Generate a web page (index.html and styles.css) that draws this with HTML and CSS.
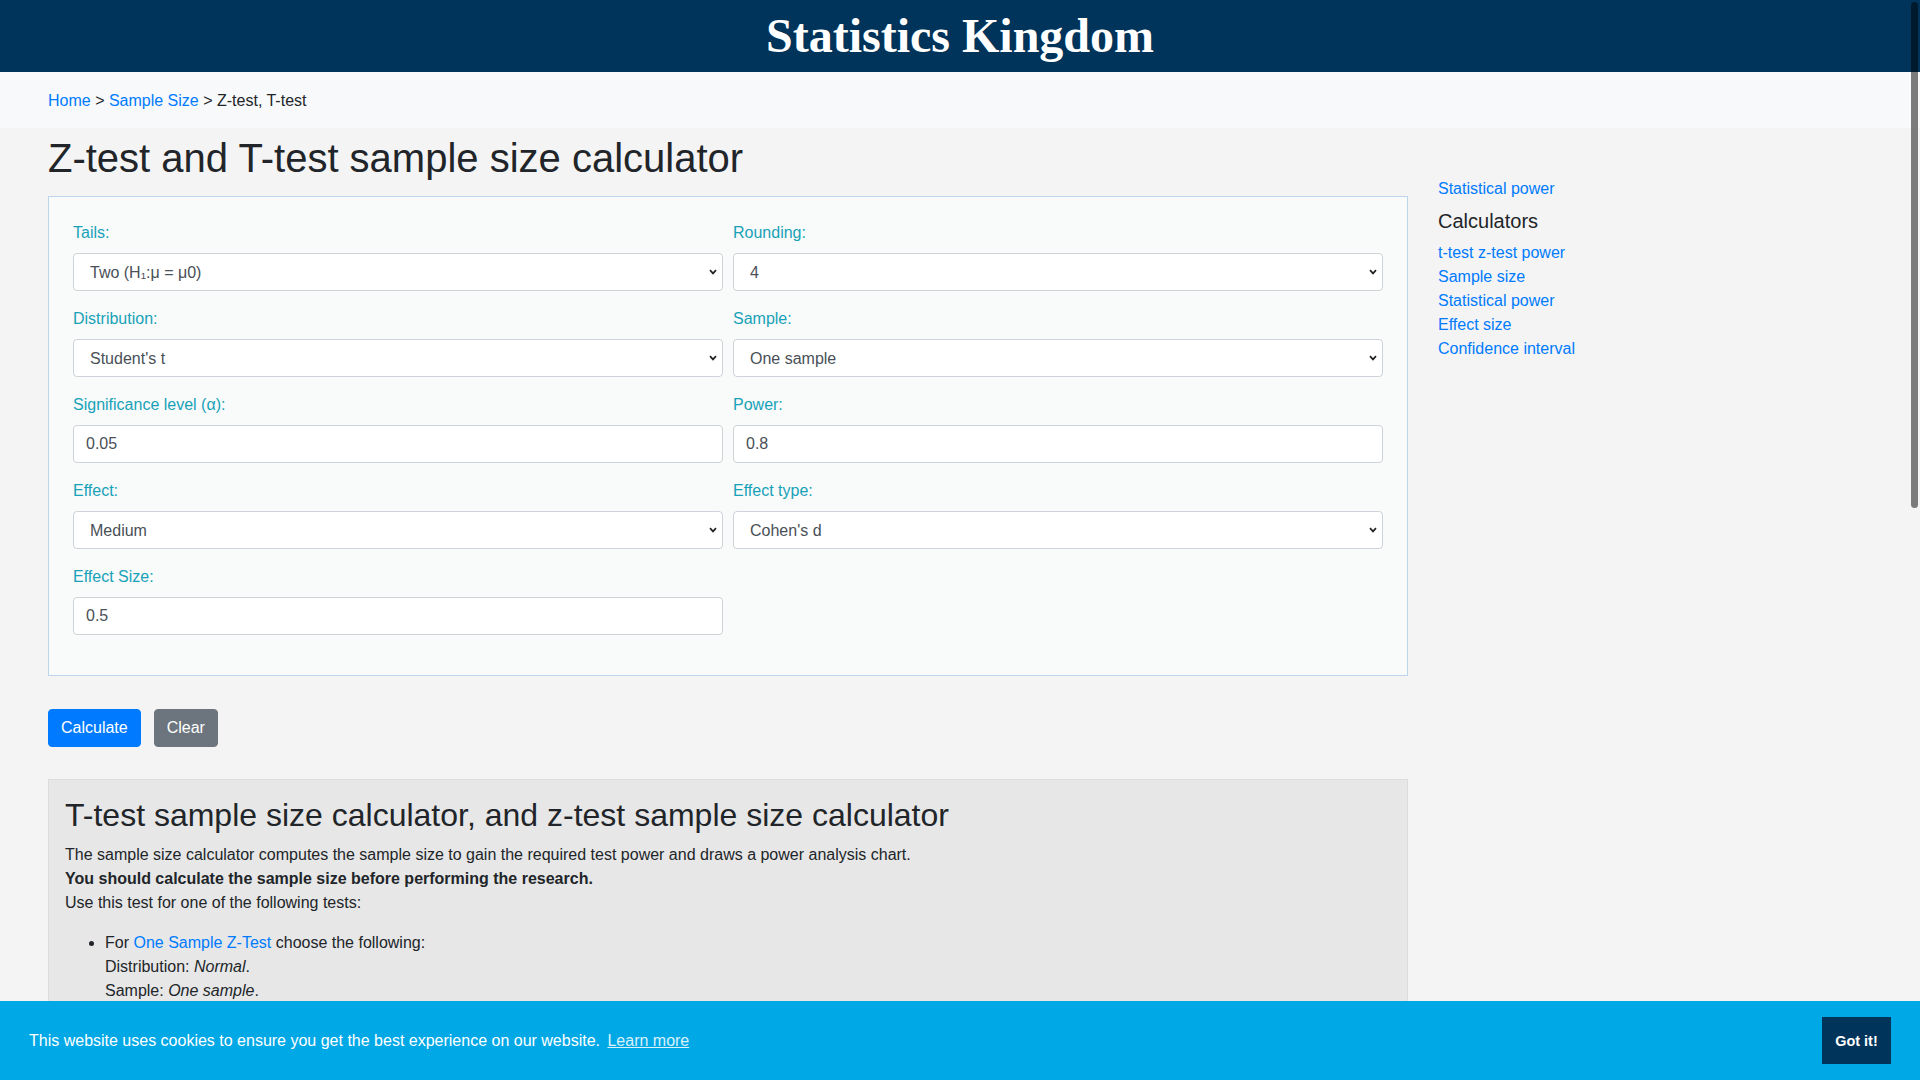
FILE: index.html
```html
<!DOCTYPE html>
<html lang="en">
<head>
<meta charset="utf-8">
<title>Z-test and T-test sample size calculator</title>
<link rel="stylesheet" href="styles.css">
</head>
<body>
<header class="topbar"><div class="brand">Statistics Kingdom</div></header>
<nav class="crumbs"><a href="#">Home</a> &gt; <a href="#">Sample Size</a> &gt; Z-test, T-test</nav>
<div class="page">
  <main class="main">
    <h1 class="title">Z-test and T-test sample size calculator</h1>
    <form class="card">
      <div class="grid">
        <div class="field">
          <label class="lbl">Tails:</label>
          <span class="sel"><select class="ctl ctl-sel"><option>Two (H₁:μ = μ0)</option></select><svg class="chev" width="8" height="6" viewBox="0 0 8 6"><polyline points="1,1.2 4,4.4 7,1.2" fill="none" stroke="#222" stroke-width="1.7"/></svg></span>
        </div>
        <div class="field">
          <label class="lbl">Rounding:</label>
          <span class="sel"><select class="ctl ctl-sel"><option>4</option></select><svg class="chev" width="8" height="6" viewBox="0 0 8 6"><polyline points="1,1.2 4,4.4 7,1.2" fill="none" stroke="#222" stroke-width="1.7"/></svg></span>
        </div>
        <div class="field">
          <label class="lbl">Distribution:</label>
          <span class="sel"><select class="ctl ctl-sel"><option>Student's t</option></select><svg class="chev" width="8" height="6" viewBox="0 0 8 6"><polyline points="1,1.2 4,4.4 7,1.2" fill="none" stroke="#222" stroke-width="1.7"/></svg></span>
        </div>
        <div class="field">
          <label class="lbl">Sample:</label>
          <span class="sel"><select class="ctl ctl-sel"><option>One sample</option></select><svg class="chev" width="8" height="6" viewBox="0 0 8 6"><polyline points="1,1.2 4,4.4 7,1.2" fill="none" stroke="#222" stroke-width="1.7"/></svg></span>
        </div>
        <div class="field">
          <label class="lbl">Significance level (α):</label>
          <input class="ctl" type="text" value="0.05">
        </div>
        <div class="field">
          <label class="lbl">Power:</label>
          <input class="ctl" type="text" value="0.8">
        </div>
        <div class="field">
          <label class="lbl">Effect:</label>
          <span class="sel"><select class="ctl ctl-sel"><option>Medium</option></select><svg class="chev" width="8" height="6" viewBox="0 0 8 6"><polyline points="1,1.2 4,4.4 7,1.2" fill="none" stroke="#222" stroke-width="1.7"/></svg></span>
        </div>
        <div class="field">
          <label class="lbl">Effect type:</label>
          <span class="sel"><select class="ctl ctl-sel"><option>Cohen's d</option></select><svg class="chev" width="8" height="6" viewBox="0 0 8 6"><polyline points="1,1.2 4,4.4 7,1.2" fill="none" stroke="#222" stroke-width="1.7"/></svg></span>
        </div>
        <div class="field">
          <label class="lbl">Effect Size:</label>
          <input class="ctl" type="text" value="0.5">
        </div>
      </div>
    </form>
    <div class="actions">
      <button class="btn btn-primary" type="button">Calculate</button>
      <button class="btn btn-secondary" type="button">Clear</button>
    </div>
    <section class="info">
      <h2 class="info-title">T-test sample size calculator, and z-test sample size calculator</h2>
      <div class="info-text">
        <div class="line">The sample size calculator computes the sample size to gain the required test power and draws a power analysis chart.</div>
        <div class="line strong">You should calculate the sample size before performing the research.</div>
        <div class="line">Use this test for one of the following tests:</div>
      </div>
      <ul class="info-list">
        <li>
          <div class="line">For <a href="#">One Sample Z-Test</a> choose the following:</div>
          <div class="line">Distribution: <em>Normal</em>.</div>
          <div class="line">Sample: <em>One sample</em>.</div>
        </li>
        <li>
          <div class="line">For <a href="#">Two Sample Z-Test</a> choose the following:</div>
          <div class="line">Distribution: <em>Normal</em>.</div>
          <div class="line">Sample: <em>Two samples</em>.</div>
        </li>
      </ul>
    </section>
  </main>
  <aside class="side">
    <a class="side-link" href="#">Statistical power</a>
    <h3 class="side-head">Calculators</h3>
    <a class="side-link" href="#">t-test z-test power</a>
    <a class="side-link" href="#">Sample size</a>
    <a class="side-link" href="#">Statistical power</a>
    <a class="side-link" href="#">Effect size</a>
    <a class="side-link" href="#">Confidence interval</a>
  </aside>
</div>
<div class="cookie">
  <span class="cookie-msg">This website uses cookies to ensure you get the best experience on our website. <a class="cookie-link" href="#">Learn more</a></span>
  <a class="cookie-btn" href="#">Got it!</a>
</div>
<div class="thumb"></div>
</body>
</html>
```
FILE: styles.css
```css
html, body {
  margin: 0;
  padding: 0;
}
body {
  width: 1920px;
  height: 1080px;
  overflow: hidden;
  background: #f4f4f4;
  color: #212529;
  font-family: "Liberation Sans", Arial, Helvetica, sans-serif;
  font-size: 16px;
  line-height: 24px;
}
a {
  color: #007bff;
  text-decoration: none;
}
.topbar {
  height: 72px;
  background: #00345a;
  text-align: center;
}
.brand {
  font-family: "Liberation Serif", "Times New Roman", serif;
  font-weight: bold;
  font-size: 48px;
  line-height: 72px;
  color: #ffffff;
}
.crumbs {
  background: #f8f9fa;
  padding: 17px 48px 15px;
  height: 24px;
  color: #212529;
}
.page {
  display: flex;
  gap: 30px;
  padding: 0 48px;
}
.main {
  width: 1360px;
  flex: none;
}
.title {
  font-size: 40px;
  line-height: 48px;
  font-weight: normal;
  margin: 6px 0 14px;
  color: #212529;
}
.card {
  margin: 0;
  border: 1px solid #bcd5ec;
  background: #f9fafa;
  padding: 24px 24px 40px;
}
.grid {
  display: grid;
  grid-template-columns: 1fr 1fr;
  column-gap: 10px;
  row-gap: 16px;
}
.field {
  display: flex;
  flex-direction: column;
}
.lbl {
  color: #17a2b8;
  line-height: 24px;
  margin-bottom: 8px;
}
.ctl {
  box-sizing: border-box;
  height: 38px;
  width: 100%;
  border: 1px solid #ced4da;
  border-radius: 4px;
  background: #ffffff;
  color: #495057;
  font-family: "Liberation Sans", Arial, sans-serif;
  font-size: 16px;
  padding: 0 12px;
  margin: 0;
  outline: none;
}
.sel {
  position: relative;
  display: block;
}
.ctl-sel {
  -webkit-appearance: none;
  appearance: none;
  padding: 0 24px 0 16px;
}
.chev {
  position: absolute;
  right: 6px;
  top: 16px;
}
.actions {
  display: flex;
  gap: 12px;
  margin-top: 33px;
}
.btn {
  height: 38px;
  border: 1px solid transparent;
  border-radius: 4px;
  padding: 0 12px;
  color: #ffffff;
  font-family: "Liberation Sans", Arial, sans-serif;
  font-size: 16px;
  line-height: 24px;
}
.btn-primary {
  background: #007bff;
  border-color: #007bff;
}
.btn-secondary {
  background: #6c757d;
  border-color: #6c757d;
  margin-left: 1px;
}
.info {
  margin-top: 32px;
  background: #e7e7e7;
  border: 1px solid #dcdcdc;
  padding: 16px;
}
.info-title {
  font-size: 32px;
  line-height: 38px;
  font-weight: normal;
  margin: 0 0 9px;
}
.info-text {
  margin: 0 0 16px;
}
.line {
  line-height: 24px;
}
.strong {
  font-weight: bold;
}
.info-list {
  margin: 0;
  padding-left: 40px;
}
.side {
  padding-top: 49px;
  display: flex;
  flex-direction: column;
  align-items: flex-start;
}
.side-head {
  font-size: 20px;
  line-height: 24px;
  font-weight: normal;
  margin: 8px 0;
  color: #212529;
}
.cookie {
  position: fixed;
  left: 0;
  right: 0;
  bottom: 0;
  height: 79px;
  box-sizing: border-box;
  background: #00a8e6;
  color: #ffffff;
  display: flex;
  align-items: center;
  justify-content: space-between;
  padding: 0 29px;
  font-family: "Liberation Sans", Helvetica, Arial, sans-serif;
  font-size: 16px;
}
.cookie-link {
  color: #ffffff;
  opacity: 0.85;
  text-decoration: underline;
  padding: 0 3px;
}
.cookie-btn {
  background: #00345a;
  color: #ffffff;
  font-weight: bold;
  font-size: 14.4px;
  width: 69px;
  height: 47px;
  display: flex;
  align-items: center;
  justify-content: center;
  box-sizing: border-box;
}
.thumb {
  position: fixed;
  left: 1911px;
  top: 2px;
  width: 7px;
  height: 506px;
  border-radius: 4px;
  background: rgba(0, 0, 0, 0.5);
}
```
